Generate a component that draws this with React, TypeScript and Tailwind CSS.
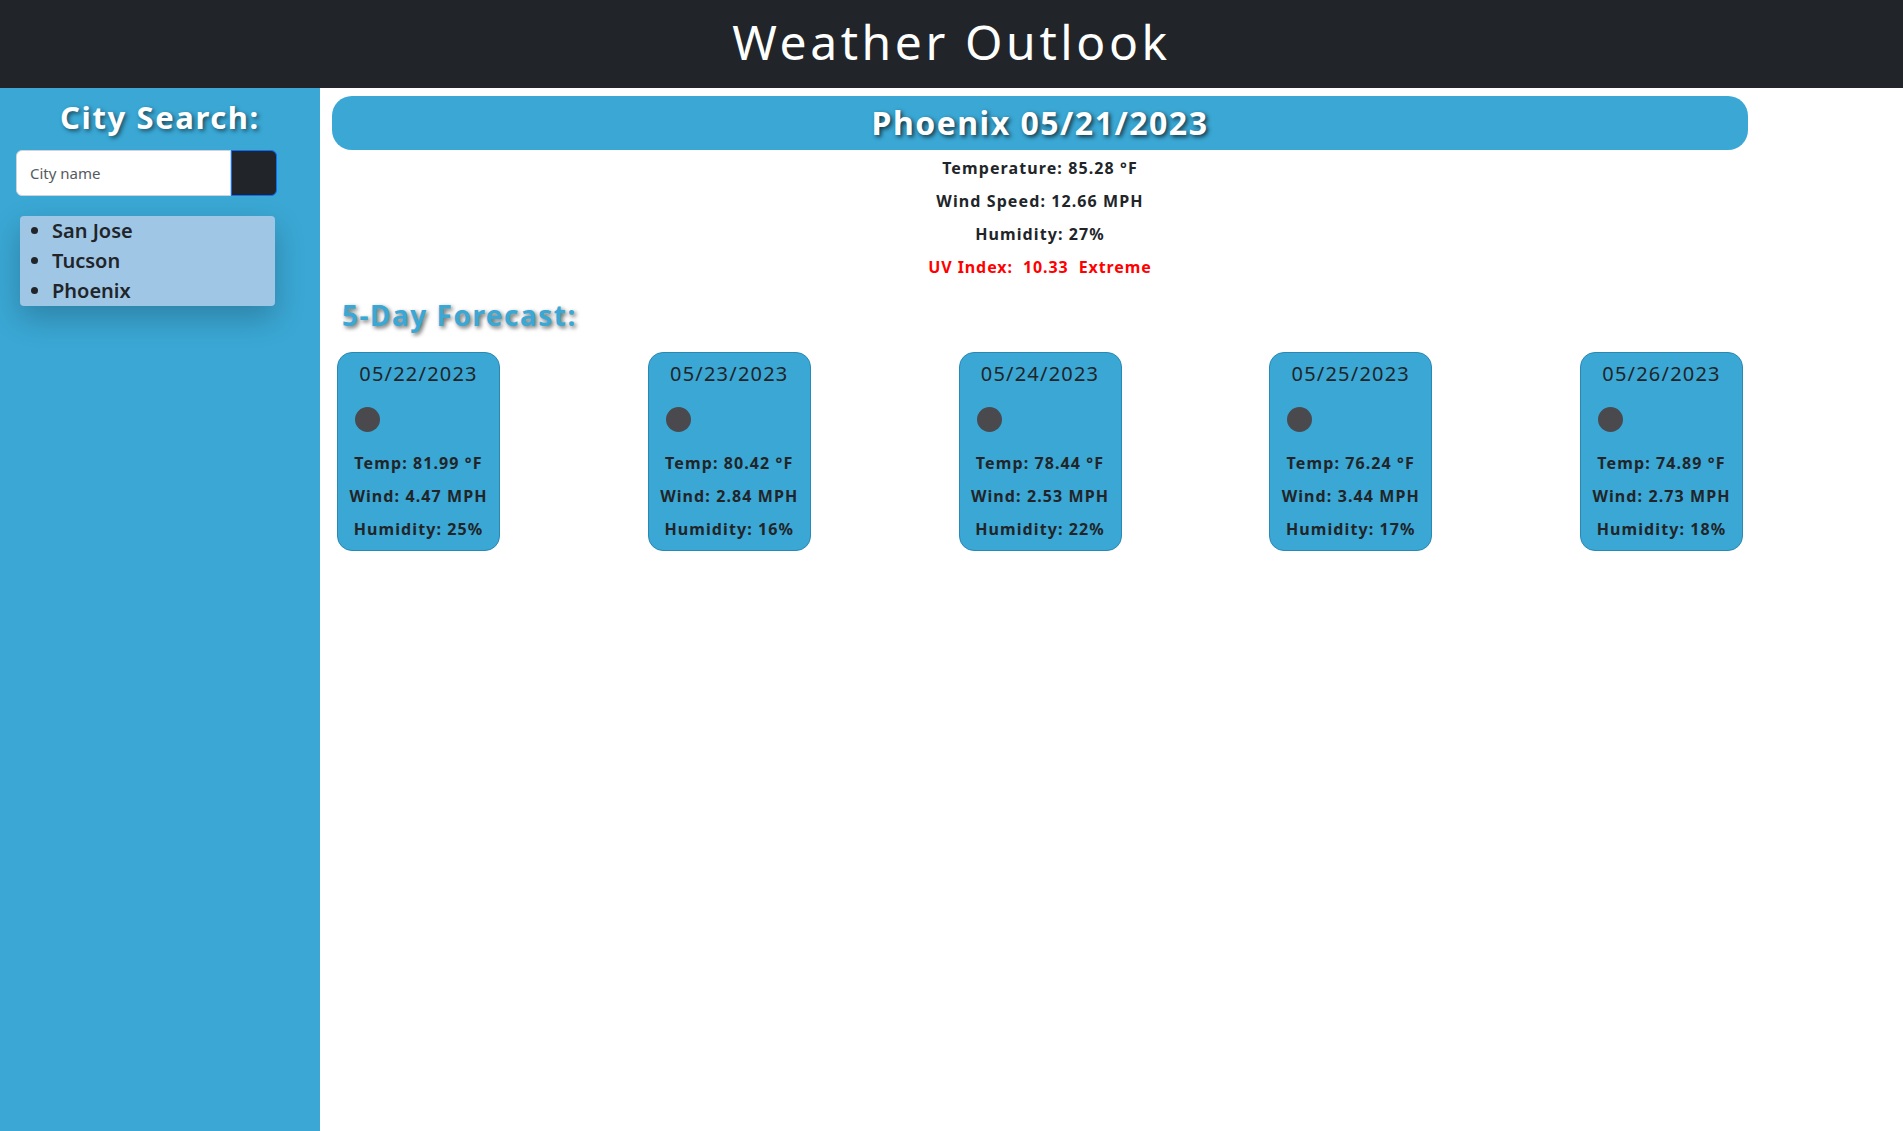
import React from "react";

const forecast = [
  { date: "05/22/2023", temp: "81.99", wind: "4.47", hum: "25" },
  { date: "05/23/2023", temp: "80.42", wind: "2.84", hum: "16" },
  { date: "05/24/2023", temp: "78.44", wind: "2.53", hum: "22" },
  { date: "05/25/2023", temp: "76.24", wind: "3.44", hum: "17" },
  { date: "05/26/2023", temp: "74.89", wind: "2.73", hum: "18" },
];

export default function App() {
  return (
    <div className="min-h-screen bg-white text-[#212529] font-['Noto_Sans','Lato',sans-serif]">
      <header className="h-[88px] bg-[#212529] flex items-center justify-center pb-[4px]">
        <h1 className="text-[48px] leading-none text-white tracking-[3.6px] font-normal">Weather Outlook</h1>
      </header>
      <div className="flex min-h-[1043px]">
        <aside className="w-[320px] shrink-0 bg-[#3aa7d4] pt-[9px]">
          <h2 className="text-center text-[31px] leading-[40px] font-bold text-white tracking-[1.6px] [text-shadow:2px_2px_4px_rgba(0,0,0,0.55)]">
            City Search:
          </h2>
          <div className="mt-[13px] ml-[16px] w-[261px] flex h-[46px]">
            <input
              placeholder="City name"
              className="flex-1 min-w-0 h-full bg-white border border-[#ced4da] rounded-l-[6px] pl-[13px] text-[15px] placeholder:text-[#555b61] outline-none"
            />
            <button className="w-[46px] h-full bg-[#212529] border border-[#0d6efd] rounded-r-[6px]" />
          </div>
          <ul className="mt-[20px] ml-[20px] w-[255px] bg-[#a0c6e6] rounded-[4px] shadow-[0_12px_30px_rgba(0,0,0,0.22)] pl-[32px] list-disc text-[20px] leading-[30px] font-semibold text-[#212529]">
            <li>San Jose</li>
            <li>Tucson</li>
            <li>Phoenix</li>
          </ul>
        </aside>
        <main className="ml-[12px] w-[1416px]">
          <div className="mt-[8px] h-[54px] rounded-[20px] bg-[#3aa7d4] flex items-center justify-center">
            <h2 className="text-[32px] font-bold text-white tracking-[1.5px] [text-shadow:2px_2px_4px_rgba(0,0,0,0.7)]">
              Phoenix 05/21/2023
            </h2>
          </div>
          <div className="pt-[2px] text-center text-[16px] leading-[33px] font-bold tracking-[1.1px]">
            <p>Temperature: 85.28 °F</p>
            <p>Wind Speed: 12.66 MPH</p>
            <p>Humidity: 27%</p>
            <p className="text-[#ff0000] whitespace-pre tracking-[0.9px]">UV Index:  10.33  Extreme</p>
          </div>
          <h3 className="mt-[13px] ml-[10px] text-[28px] leading-[36px] font-bold text-[#3aa7d4] tracking-[1.5px] [text-shadow:2px_2px_4px_rgba(0,0,0,0.6)]">
            5-Day Forecast:
          </h3>
          <div className="mt-[19px] px-[5px] flex justify-between">
            {forecast.map((d) => (
              <div
                key={d.date}
                className="w-[163px] h-[199px] bg-[#3aa7d4] border border-[#2a88b3] rounded-[15px] pt-[7px] text-center"
              >
                <div className="text-[20px] leading-[28px] tracking-[1.2px]">{d.date}</div>
                <div className="mt-[19px] ml-[17px] w-[25px] h-[25px] rounded-full bg-[#4a4a4e]" />
                <div className="mt-[15px] text-[16px] leading-[33px] font-bold tracking-[1.1px] whitespace-nowrap">
                  <p>Temp: {d.temp} °F</p>
                  <p>Wind: {d.wind} MPH</p>
                  <p>Humidity: {d.hum}%</p>
                </div>
              </div>
            ))}
          </div>
        </main>
      </div>
    </div>
  );
}
